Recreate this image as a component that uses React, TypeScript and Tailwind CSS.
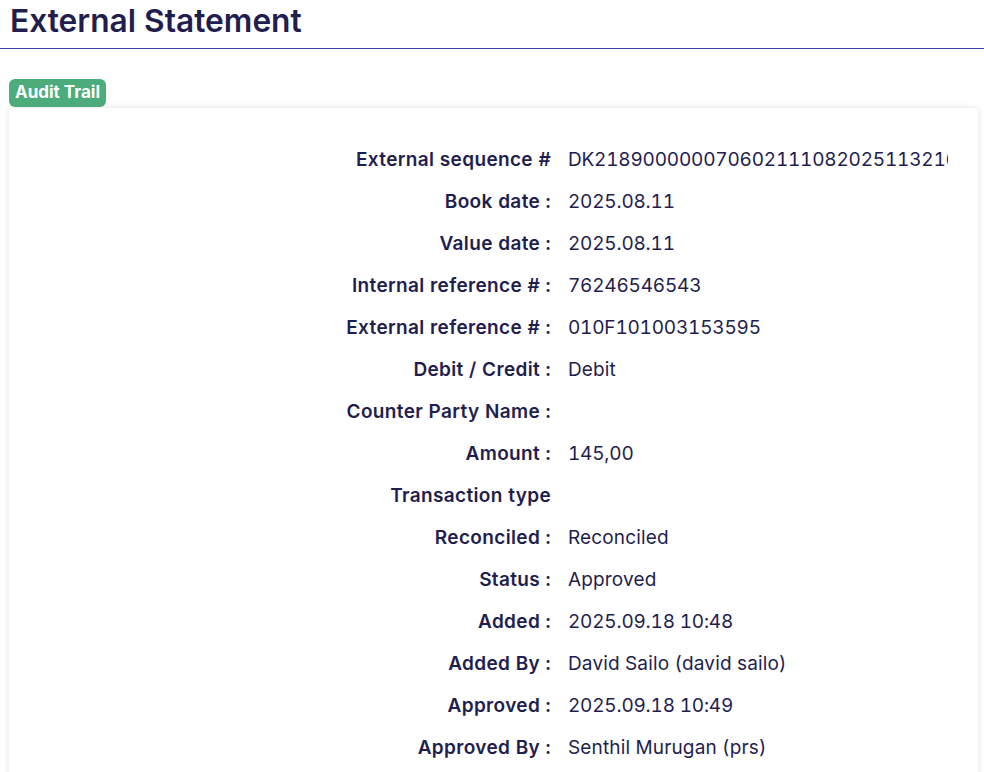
import React from "react";

const rows: [string, string][] = [
  ["External sequence #", "DK21890000007060211108202511321685"],
  ["Book date :", "2025.08.11"],
  ["Value date :", "2025.08.11"],
  ["Internal reference # :", "76246546543"],
  ["External reference # :", "010F101003153595"],
  ["Debit / Credit :", "Debit"],
  ["Counter Party Name :", ""],
  ["Amount :", "145,00"],
  ["Transaction type", ""],
  ["Reconciled :", "Reconciled"],
  ["Status :", "Approved"],
  ["Added :", "2025.09.18 10:48"],
  ["Added By :", "David Sailo (david sailo)"],
  ["Approved :", "2025.09.18 10:49"],
  ["Approved By :", "Senthil Murugan (prs)"],
];

const isNumeric = (v: string) => /\d{2}/.test(v);

export default function App() {
  return (
    <div
      className="w-[984px] h-[772px] overflow-hidden bg-white text-[#1f1e4e]"
      style={{ fontFamily: "Inter, 'Noto Sans', sans-serif" }}
    >
      <div className="h-[49px] border-b border-[#3b46a8] px-[10px] flex items-center">
        <h1 className="text-[31.7px] font-semibold leading-none mt-[-7px]">
          External Statement
        </h1>
      </div>
      <div className="px-[9px] pt-[30px]">
        <span className="inline-block bg-[#4cac7c] text-white text-[17px] font-bold leading-[27px] px-[6px] rounded-[6px] h-[28px]">
          Audit Trail
        </span>
        <div className="mt-[1px] mr-[-3px] bg-white rounded-[3px] shadow-[0_0_6px_rgba(0,0,0,0.12)] pt-[31px] pb-[10px]">
          {rows.map(([label, value]) => (
            <div key={label} className="flex h-[42px] items-center text-[19px] tabular-nums">
              <div className="w-[542px] shrink-0 text-right font-semibold whitespace-nowrap tracking-[0.35px]">
                {label}
              </div>
              <div
                className={
                  isNumeric(value)
                    ? "ml-[17px] w-[380px] overflow-hidden whitespace-nowrap tracking-[-0.2px]"
                    : "ml-[17px] w-[380px] overflow-hidden whitespace-nowrap tracking-[0.15px]"
                }
              >
                {value}
              </div>
            </div>
          ))}
        </div>
      </div>
    </div>
  );
}
